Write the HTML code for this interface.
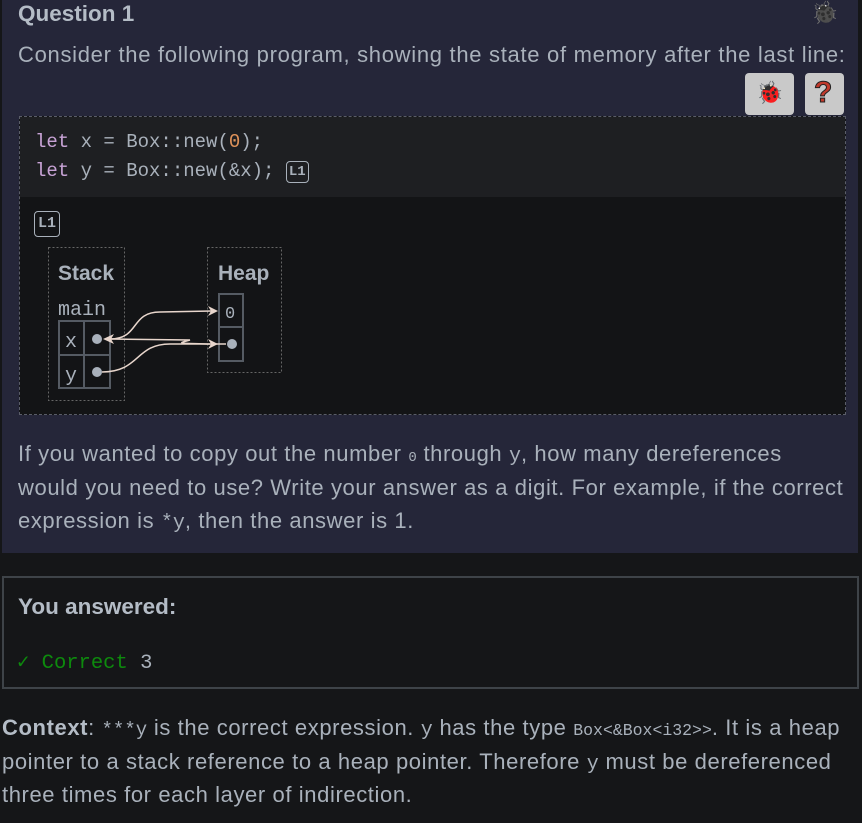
<!DOCTYPE html>
<html><head><style>
*{margin:0;padding:0;box-sizing:border-box}
body{width:862px;height:823px;background:#151618;color:#a9b1bb;font-family:"Liberation Sans",sans-serif;position:relative;overflow:hidden}
.a{position:absolute;white-space:nowrap}
.m{font-family:"Liberation Mono",monospace}
.panel{position:absolute;left:2px;top:0;width:856px;height:553px;background:#252639}
.btn{position:absolute;background:#c9c9c9;border-radius:4px}
.code{position:absolute;left:19px;top:116px;width:827px;height:299px;border:1px dashed #5a5d68;background:#131416}
.codebg{position:absolute;left:0;top:0;width:100%;height:80px;background:#1e1f22}
.t{font-size:22px;letter-spacing:0.6px}
.t div{height:33.5px;line-height:33.5px}
.t .m{letter-spacing:0}
</style></head><body>
<div class="panel"></div>
<div class="a" style="left:18px;top:1px;font-size:22.5px;font-weight:bold;color:#b4bcc6">Question 1</div>
<div class="a" style="left:811px;top:0px;font-size:22px;filter:grayscale(1)">🐞</div>
<div class="a t" style="left:18px;top:38px;letter-spacing:0.7px"><div>Consider the following program, showing the state of memory after the last line:</div></div>
<div class="btn" style="left:745px;top:73px;width:49px;height:42px"></div>
<div class="a" style="left:756px;top:80px;font-size:22px">🐞</div>
<div class="btn" style="left:805px;top:73px;width:39px;height:42px"></div>
<div class="a" style="left:814px;top:76px;font-size:30px;font-weight:bold;color:#c0392b;-webkit-text-stroke:1px #222">?</div>
<div class="code"><div class="codebg"></div></div>
<div class="a m" style="left:35px;top:128px;font-size:19px;letter-spacing:0px;line-height:29px;color:#a9b1bb">
<span style="color:#c8a3d6">let</span> x = Box::new(<span style="color:#e0935a">0</span>);<br>
<span style="color:#c8a3d6">let</span> y = Box::new(&amp;x); <span style="display:inline-block;border:1.5px solid #a9b1bb;border-radius:4px;font-size:14px;font-weight:bold;padding:1px 2px;line-height:18px;vertical-align:1px">L1</span></div>
<div class="a m" style="left:34px;top:211px;border:1.5px solid #a9b1bb;border-radius:4px;font-size:15px;font-weight:bold;padding:3px 3px;line-height:18px">L1</div>
<svg class="a" style="left:0;top:0" width="862" height="430">
<rect x="48.5" y="247.5" width="76" height="153" fill="none" stroke="#666" stroke-dasharray="2,2"/>
<rect x="207.5" y="247.5" width="74" height="125" fill="none" stroke="#666" stroke-dasharray="2,2"/>
<rect x="59" y="321" width="51" height="67" fill="none" stroke="#555b63" stroke-width="2"/>
<line x1="84" y1="321" x2="84" y2="388" stroke="#555b63" stroke-width="2"/>
<line x1="59" y1="355" x2="110" y2="355" stroke="#555b63" stroke-width="2"/>
<rect x="219" y="294" width="24" height="67" fill="none" stroke="#555b63" stroke-width="2"/>
<line x1="219" y1="327" x2="243" y2="327" stroke="#555b63" stroke-width="2"/>
<circle cx="97" cy="339" r="5" fill="#a9b1bb"/>
<circle cx="97" cy="372" r="5" fill="#a9b1bb"/>
<circle cx="232" cy="344" r="5" fill="#a9b1bb"/>
<g fill="none" stroke="#e8d6cc" stroke-width="1.5">
<path d="M110 339 C140 339,130 312,160 312 L212 311"/>
<path d="M110 339 L190 340 C175 344,180 343,210 344 L226 344"/>
<path d="M102 372 C140 372,135 344,170 344 L210 344"/>
</g>
<path d="M218 311 L208 306 L211 311 L208 316Z" fill="#e8d6cc"/>
<path d="M218 344 L208 339 L211 344 L208 349Z" fill="#e8d6cc"/>
<path d="M103 339 L114 334 L111 339 L114 344Z" fill="#e8d6cc"/>
<text x="58" y="280" font-family="Liberation Sans" font-weight="bold" font-size="21" fill="#a9b1bb">Stack</text>
<text x="218" y="280" font-family="Liberation Sans" font-weight="bold" font-size="21" fill="#a9b1bb">Heap</text>
<text x="58" y="315" font-family="Liberation Mono" font-size="20" fill="#a9b1bb">main</text>
<text x="65" y="347" font-family="Liberation Mono" font-size="20" fill="#a9b1bb">x</text>
<text x="65" y="381" font-family="Liberation Mono" font-size="20" fill="#a9b1bb">y</text>
<text x="225" y="318" font-family="Liberation Mono" font-size="17" fill="#a9b1bb">0</text>
</svg>
<div class="a t" style="left:18px;top:437px">
<div>If you wanted to copy out the number <span class="m" style="font-size:14px">0</span> through <span class="m" style="font-size:20px">y</span>, how many dereferences</div>
<div>would you need to use? Write your answer as a digit. For example, if the correct</div>
<div>expression is <span class="m" style="font-size:20px">*y</span>, then the answer is 1.</div></div>
<div class="a" style="left:2px;top:576px;width:857px;height:113px;border:2px solid #3e4348"></div>
<div class="a" style="left:18px;top:594px;font-size:22.5px;font-weight:bold;color:#b4bcc6">You answered:</div>
<div class="a m" style="left:17px;top:649px;font-size:20.5px"><span style="color:#0d8a0d">✓ Correct</span> 3</div>
<div class="a t" style="left:2px;top:711px">
<div><b style="color:#b4bcc6">Context</b>: <span class="m" style="font-size:19px">***y</span> is the correct expression. <span class="m" style="font-size:20px">y</span> has the type <span class="m" style="font-size:16.5px">Box&lt;&amp;Box&lt;i32&gt;&gt;</span>. It is a heap</div>
<div>pointer to a stack reference to a heap pointer. Therefore <span class="m" style="font-size:20px">y</span> must be dereferenced</div>
<div>three times for each layer of indirection.</div></div>
</body></html>
